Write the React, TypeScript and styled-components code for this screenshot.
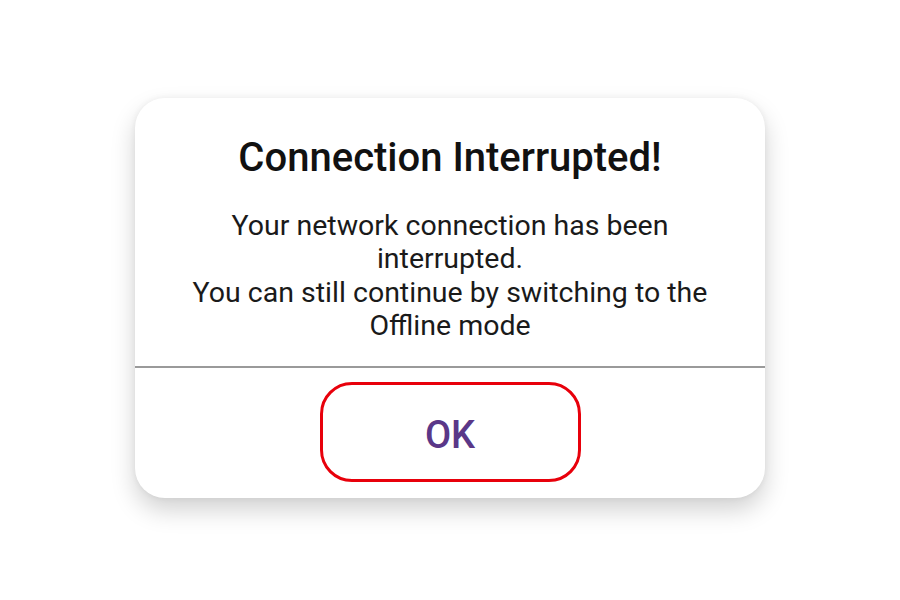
import styled, { createGlobalStyle } from 'styled-components'

const GlobalStyle = createGlobalStyle`
  html, body {
    margin: 0;
    padding: 0;
    background: #ffffff;
    font-family: Roboto, "Noto Sans", sans-serif;
  }
`

const Page = styled.div`
  display: flex;
  align-items: center;
  justify-content: center;
  width: 100vw;
  height: 100vh;
  padding-bottom: 4px;
  box-sizing: border-box;
`

const Dialog = styled.div`
  width: 630px;
  height: 400px;
  box-sizing: border-box;
  background: #ffffff;
  border-radius: 30px;
  box-shadow: 0 12px 24px rgba(0, 0, 0, 0.18), 0 0 6px rgba(0, 0, 0, 0.06);
  display: flex;
  flex-direction: column;
  overflow: hidden;
`

const Body = styled.div`
  display: flex;
  flex-direction: column;
  align-items: center;
  padding: 36px 40px 0;
  height: 268px;
  box-sizing: border-box;
  text-align: center;
`

const Title = styled.h1`
  margin: 0;
  font-size: 40px;
  font-weight: 500;
  line-height: 47px;
  color: #111111;
`

const Message = styled.p`
  margin: 28px 0 0;
  font-size: 28.5px;
  font-weight: 400;
  line-height: 33.3px;
  color: #1a1a1a;
  max-width: 550px;
`

const Divider = styled.hr`
  margin: 0;
  border: none;
  height: 2px;
  background: #9a9a9a;
`

const Footer = styled.div`
  flex: 1;
  display: flex;
  align-items: center;
  justify-content: center;
`

const OkButton = styled.button`
  width: 261px;
  height: 100px;
  box-sizing: border-box;
  border: 3px solid #e8000b;
  border-radius: 32px;
  background: transparent;
  color: #5a3788;
  font-family: Roboto, "Noto Sans", sans-serif;
  font-size: 38px;
  font-weight: 500;
  cursor: pointer;
  margin-top: -2px;
  padding: 5px 0 0;
`

const App = (): JSX.Element => {
  return (
    <>
      <GlobalStyle />
      <Page>
        <Dialog>
          <Body>
            <Title>Connection Interrupted!</Title>
            <Message>
              Your network connection has been interrupted.
              <br />
              You can still continue by switching to the Offline mode
            </Message>
          </Body>
          <Divider />
          <Footer>
            <OkButton>OK</OkButton>
          </Footer>
        </Dialog>
      </Page>
    </>
  )
}

export default App
